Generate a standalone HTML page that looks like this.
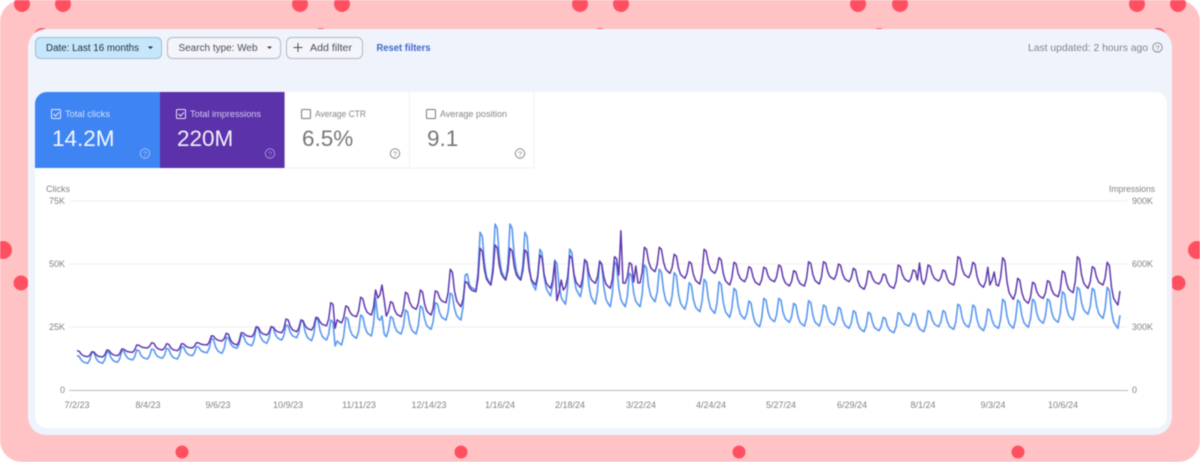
<!DOCTYPE html>
<html lang="en"><head><meta charset="utf-8"><title>Search performance</title>
<style>
html,body{margin:0;padding:0;background:#fff;width:1200px;height:462px;overflow:hidden}
svg{display:block;filter:blur(.55px);font-family:"Liberation Sans",Arial,sans-serif}
.ax{font-size:9px;fill:#828282}
.lb{font-size:9.5px}
.n{font-size:22.5px}
.d{text-anchor:middle}
</style></head><body>
<svg width="1200" height="462" viewBox="0 0 1200 462" xmlns="http://www.w3.org/2000/svg">
<rect width="1200" height="462" rx="22" fill="#ffc3c5"/>
<g fill="#ff5062">
<circle cx="22" cy="4" r="8"/><circle cx="63" cy="4" r="8"/><circle cx="300" cy="4" r="8"/><circle cx="342" cy="4" r="8"/><circle cx="580" cy="4" r="8"/><circle cx="621" cy="4" r="8"/><circle cx="858" cy="4" r="8"/><circle cx="900" cy="4" r="8"/><circle cx="1137" cy="4" r="8"/><circle cx="1178" cy="4" r="8"/>
<circle cx="42" cy="36" r="8"/><circle cx="321" cy="36" r="8"/><circle cx="600" cy="36" r="8"/><circle cx="879" cy="36" r="8"/><circle cx="1158" cy="36" r="8"/>
<circle cx="3" cy="250" r="9"/><circle cx="21" cy="283" r="7.5"/><circle cx="1197" cy="250" r="9"/><circle cx="1178" cy="283" r="7.5"/>
<circle cx="182" cy="452" r="6.5"/><circle cx="461" cy="452" r="6.5"/><circle cx="739" cy="452" r="6.5"/><circle cx="1018" cy="452" r="6.5"/>
</g>
<rect x="28" y="29" width="1144" height="406" rx="18" fill="#eff3fb"/>
<rect x="35" y="92" width="1132" height="336" rx="12" fill="#fff"/>

<!-- filter chips -->
<rect x="35.5" y="37.5" width="126" height="21" rx="5" fill="#c6e6fb" stroke="#9fbdd0"/>
<text x="46" y="51" font-size="10" fill="#1f2c3a" textLength="93" lengthAdjust="spacingAndGlyphs">Date: Last 16 months</text>
<path d="M148 46.5h5l-2.500 2.500z" fill="#1f2c3a"/>
<rect x="167.500" y="37.500" width="113" height="21" rx="5" fill="#f3f5fb" stroke="#b4b8c0"/>
<text x="178.500" y="51" font-size="10" fill="#4a4f55" textLength="79" lengthAdjust="spacingAndGlyphs">Search type: Web</text>
<path d="M267 46.500h5l-2.500 2.500z" fill="#3c4043"/>
<rect x="286.500" y="37.500" width="76" height="21" rx="5" fill="#f3f5fb" stroke="#b4b8c0"/>
<path d="M298 43v9M293.500 47.500h9" stroke="#4a4f55" stroke-width="1" fill="none"/>
<text x="310" y="51" font-size="10" fill="#4a4f55" textLength="42" lengthAdjust="spacingAndGlyphs">Add filter</text>
<text x="376.500" y="51" font-size="10" font-weight="bold" fill="#3f68cf" textLength="54" lengthAdjust="spacingAndGlyphs">Reset filters</text>
<text x="1028" y="51" font-size="10.500" fill="#80868b" textLength="120" lengthAdjust="spacingAndGlyphs">Last updated: 2 hours ago</text>
<circle cx="1157.500" cy="47.500" r="4.700" fill="none" stroke="#80868b" stroke-width=".9"/>
<text x="1157.500" y="50.500" font-size="7.500" fill="#80868b" text-anchor="middle">?</text>

<!-- metric tiles -->
<path d="M35 168V104a12 12 0 0 1 12-12H160V168z" fill="#3f84f3"/>
<rect x="160" y="92" width="125" height="76" fill="#5b32aa"/>
<path d="M285 92v76H534V92M409.500 92v76M285 168h249" fill="none" stroke="#f0f0f0"/>

<rect x="51.500" y="109.500" width="9" height="9" rx="1" fill="none" stroke="#dfeafd"/>
<path d="M53.500 114l2 2 3.500-3.700" fill="none" stroke="#dfeafd"/>
<text x="65" y="117" class="lb" fill="#d0e0fc" textLength="45" lengthAdjust="spacingAndGlyphs">Total clicks</text>
<text x="52" y="146" class="n" fill="#f4f8ff">14.2M</text>
<circle cx="145" cy="153.500" r="4.700" fill="none" stroke="#9dc0f7"/>
<text x="145" y="156.500" font-size="7.500" fill="#9dc0f7" text-anchor="middle">?</text>

<rect x="176.500" y="109.500" width="9" height="9" rx="1" fill="none" stroke="#e8e0f6"/>
<path d="M178.500 114l2 2 3.500-3.700" fill="none" stroke="#e8e0f6"/>
<text x="190" y="117" class="lb" fill="#d6caee" textLength="71" lengthAdjust="spacingAndGlyphs">Total impressions</text>
<text x="177" y="146" class="n" fill="#f4f0fb">220M</text>
<circle cx="270" cy="153.500" r="4.700" fill="none" stroke="#a690d4"/>
<text x="270" y="156.500" font-size="7.500" fill="#a690d4" text-anchor="middle">?</text>

<rect x="301.500" y="109.500" width="9" height="9" rx="1" fill="none" stroke="#777"/>
<text x="315" y="117" class="lb" fill="#80868b" textLength="51" lengthAdjust="spacingAndGlyphs">Average CTR</text>
<text x="302" y="146" class="n" fill="#777">6.5%</text>
<circle cx="395" cy="153.500" r="4.700" fill="none" stroke="#8a8a8a"/>
<text x="395" y="156.500" font-size="7.500" fill="#8a8a8a" text-anchor="middle">?</text>

<rect x="426.500" y="109.500" width="9" height="9" rx="1" fill="none" stroke="#777"/>
<text x="440" y="117" class="lb" fill="#80868b" textLength="67" lengthAdjust="spacingAndGlyphs">Average position</text>
<text x="427" y="146" class="n" fill="#777">9.1</text>
<circle cx="520" cy="153.500" r="4.700" fill="none" stroke="#8a8a8a"/>
<text x="520" y="156.500" font-size="7.500" fill="#8a8a8a" text-anchor="middle">?</text>

<!-- chart axes -->
<path d="M69 201H1128M69 264H1128M69 327H1128" stroke="#f1f1f1" fill="none"/>
<path d="M69 390.500H1128" stroke="#bdbdbd" fill="none"/>
<text x="46" y="192" class="ax">Clicks</text>
<text x="1155" y="192" class="ax" text-anchor="end" textLength="46" lengthAdjust="spacingAndGlyphs">Impressions</text>
<g class="ax" text-anchor="end">
<text x="65" y="204">75K</text><text x="65" y="267">50K</text><text x="65" y="330">25K</text><text x="65" y="393">0</text>
</g>
<g class="ax">
<text x="1132" y="204">900K</text><text x="1132" y="267">600K</text><text x="1132" y="330">300K</text><text x="1132" y="393">0</text>
</g>
<g class="ax d">
<text x="77" y="408">7/2/23</text><text x="148" y="408">8/4/23</text><text x="218" y="408">9/6/23</text><text x="288" y="408">10/9/23</text><text x="359" y="408">11/11/23</text><text x="429" y="408">12/14/23</text><text x="500" y="408">1/16/24</text><text x="570" y="408">2/18/24</text><text x="641" y="408">3/22/24</text><text x="711" y="408">4/24/24</text><text x="781" y="408">5/27/24</text><text x="852" y="408">6/29/24</text><text x="923" y="408">8/1/24</text><text x="993" y="408">9/3/24</text><text x="1063" y="408">10/6/24</text>
</g>
<path id="blue" fill="none" stroke="#5a98ef" stroke-width="1.600" stroke-linejoin="round"/>
<path id="purple" fill="none" stroke="#5f38ad" stroke-width="1.500" stroke-linejoin="round"/>
</svg>
<script>
(function(){
var PP=[350.7,351.7,350,349,345,342.7,343.7,343.7,342.7,335.7,333.3,332.7,326.7,326.7,319,320,317.3,
302.7,306,297.3,290,301.7,292.3,290,291,269.3,281.7,248.3,245,248.3,250,255,261.7,255.7,260,261.7,256.7,
262.7,247.3,247.3,254.3,261.7,249.3,257.7,262.3,266.7,267.3,265,270.7,261.7,261.7,264,268.3,271,274,
265,270,265,270,256.7,262.3,267.3,257.7,278.3,282.3,280.7,271,256.7,266.7,262.3];
var PT=[356.7,357,355.7,352.3,348,350,350.7,348,345,341,345,336.7,335,332.7,331.7,330,
325.7,323,316.7,315,316,316.7,309.3,315,302.7,306.7,291.7,285,280,280,285,288.3,287,287.3,283.3,288.3,
283.3,282.7,271.7,273.3,278.3,284,273.3,285,281.7,285,281.7,286,286,284,279.3,281.7,289.3,284,
288.3,281.7,284.3,281,285,277.7,287.3,286,299.3,303.3,298.3,296.7,292.7,288.3,285,305];
var BP=[355.7,352,351.7,350.7,350,349,348.3,346.7,346.7,338.3,337.3,335,327.3,326.7,325,320,318.3,
320,317.3,315,298,316.7,310,306,302.7,293,275,232.3,224,224,232.3,249.3,260,249,259.3,260.7,261.7,
273.3,265,269.3,272.7,282.7,279.3,281.7,288.3,301,298.3,298.3,303.3,300.7,305,307.3,310.7,312.3,317.3,
312.7,313.3,310.7,310.7,304.3,305,309,299.3,300,299.3,299,291.7,287.3,288.3,287.3];
var BT=[363.3,363.3,362.3,360,359,358.3,359,355.7,352.7,353.3,348.3,345.7,343.3,340,337.7,340.7,
340,345,338.3,336,336.7,334,334,329.3,320,320,290,285,280,280,290,296,304.3,296.7,304,306.7,
306.7,306.7,301.7,306,309.3,311.7,313.3,317.3,319,326.7,321.7,322.3,326,326,325,328.3,331.7,330.7,
332.7,326,331.7,326.7,329.3,327.3,330.7,328.3,328.3,327.3,323.3,322.3,320,314.3,318.3,328.3];
var f=[1,.92,.42,.16,.07,0];
function build(P,T,o){
  var v=[];
  for(var k=0;k<P.length;k++){
    var t=T[k],nx=k+1<P.length?P[k+1]:t;
    for(var i=0;i<7;i++){
      var y=i<6?t+(P[k]-t)*f[i]:t+(nx-t)*.3;
      v.push(y);
    }
  }
  for(var d in o)v[d]=o[d];
  var s="";
  for(var j=0;j<=489;j++){s+=(j?"L":"M")+(77+j*2.133).toFixed(1)+" "+v[j].toFixed(1);}
  return s;
}
document.getElementById("purple").setAttribute("d",build(PP,PT,{121:328.3,141:298,142:295,143:285,144:300,224:261.7,225:300.7,226:292,227:280,228:290,254:275,255:230.7,256:283,261:282,262:266,263:283,394:280,395:263,396:280,428:285,429:280,430:272,489:291}));
document.getElementById("blue").setAttribute("d",build(BP,BT,{121:346,141:318,143:316,145:336.7,183:274,184:285,489:315.3}));
})();
</script>
</body></html>
